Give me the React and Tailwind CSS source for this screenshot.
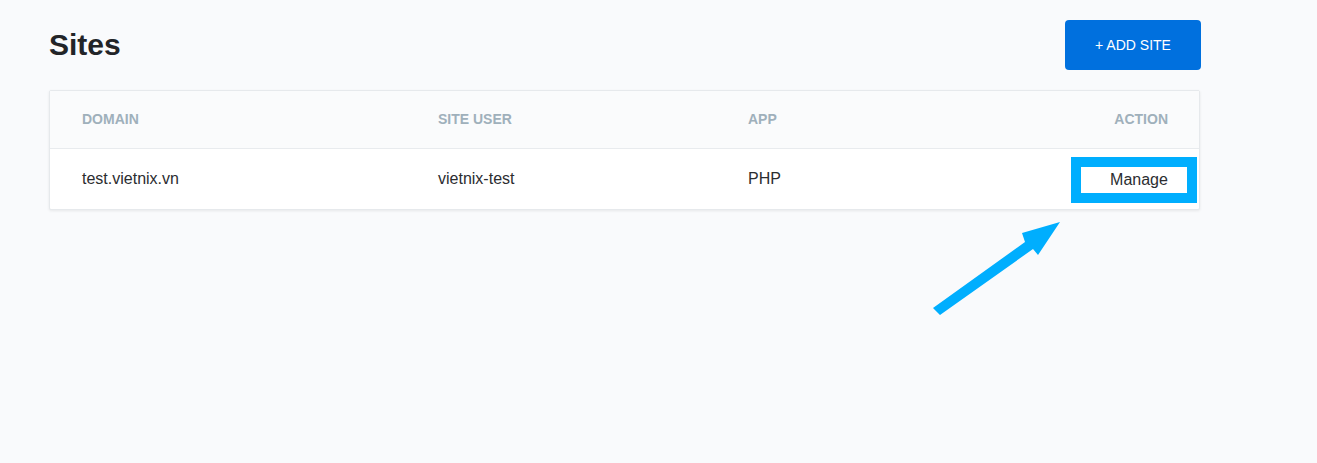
export default function App() {
  return (
    <div className="relative min-h-[463px] w-full bg-[#f9fafc] pl-[49px] pt-[20px]" style={{ fontFamily: '"Liberation Sans", Arial, sans-serif' }}>
      <div className="flex w-[1152px] items-center justify-between">
        <h1 className="text-[30px] font-bold leading-none text-[#222428]">Sites</h1>
        <button className="h-[50px] w-[136px] rounded-[4px] bg-[#0070de] text-[14px] text-white">+ ADD SITE</button>
      </div>
      <div className="mt-[20px] w-[1151px] overflow-visible rounded-[2px] border border-[#e6e9ec] bg-white shadow-[0_1px_3px_rgba(0,0,0,0.08)]">
        <div className="flex h-[58px] items-center border-b border-[#e8ebee] bg-[#fafbfc] pl-[32px] pr-[31px] text-[14px] font-bold uppercase text-[#9fb0bb]">
          <div className="w-[356px]">Domain</div>
          <div className="w-[310px]">Site User</div>
          <div className="flex-1">App</div>
          <div>Action</div>
        </div>
        <div className="flex h-[60px] items-center pl-[32px] pr-[2px] text-[16px] text-[#2b2d30]">
          <div className="w-[356px]">test.vietnix.vn</div>
          <div className="w-[310px]">vietnix-test</div>
          <div className="flex-1">PHP</div>
          <div className="mt-[2px] border-[10px] border-[#00aefe]">
            <button className="h-[26px] w-[106px] bg-white pl-[10px] text-[16px] leading-none text-[#2b2d30]">Manage</button>
          </div>
        </div>
      </div>
      <svg className="absolute left-[925px] top-[210px]" width="150" height="110" viewBox="0 0 150 110">
        <polygon points="8,98 15,105 108,39 113,45 135,12 97,23 100,32" fill="#00aefe" />
      </svg>
    </div>
  );
}
